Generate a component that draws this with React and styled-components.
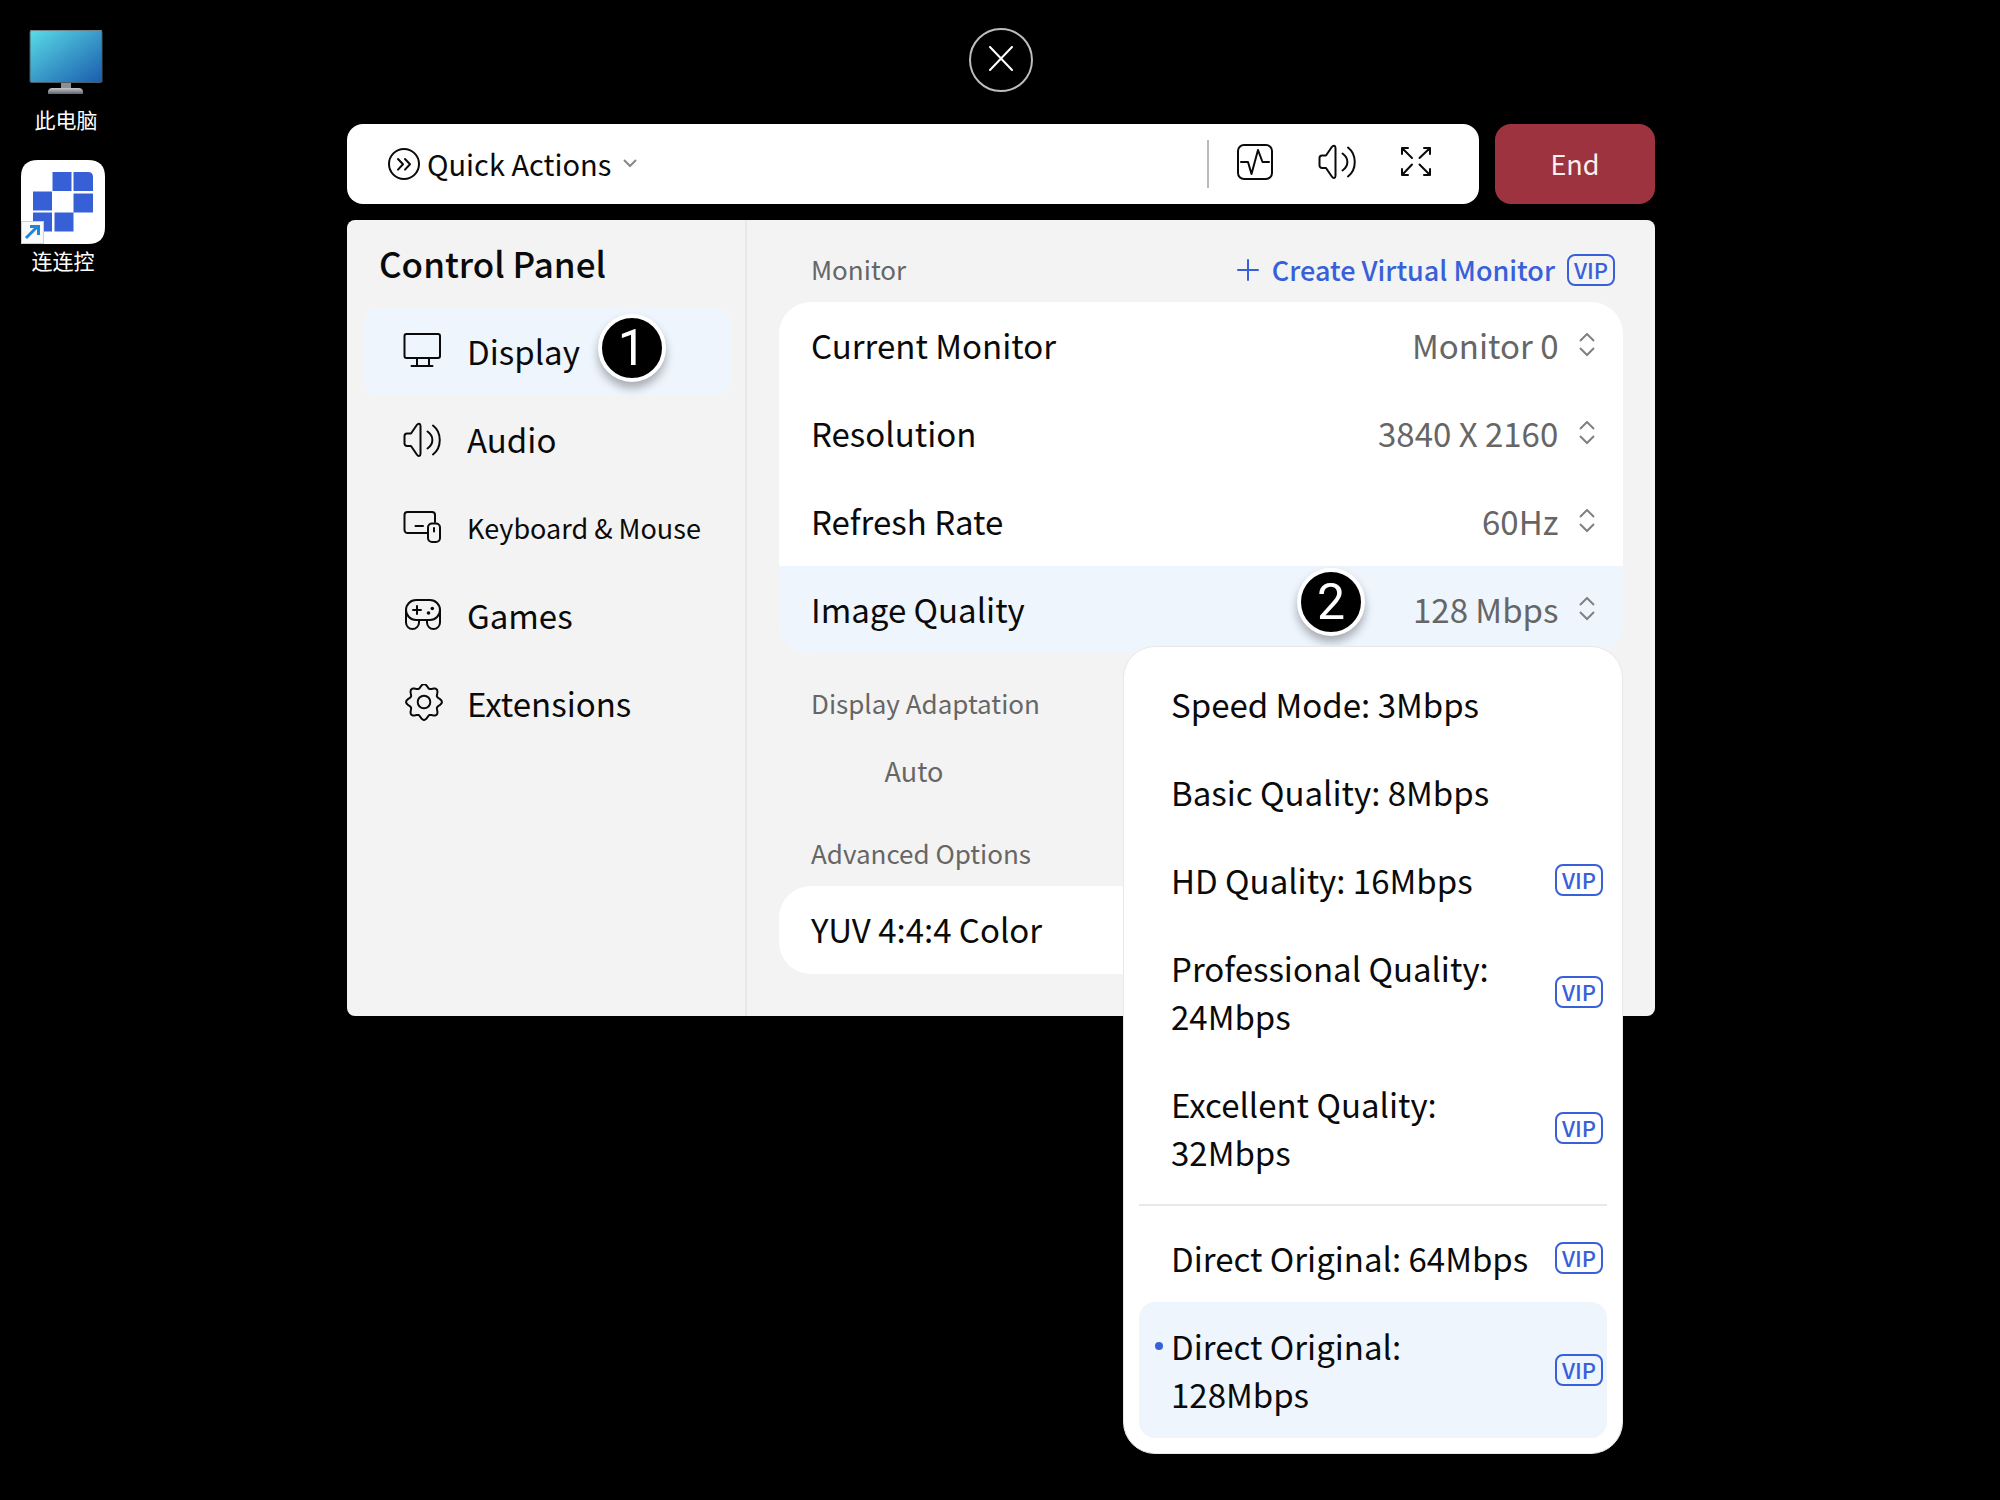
import styled, { createGlobalStyle } from "styled-components"

const GlobalStyle = createGlobalStyle`
  * {
    box-sizing: border-box;
  }

  body {
    margin: 0;
    background: #000;
    color: #0a0a0a;
    font-family: "Noto Sans CJK SC", "Noto Sans", sans-serif;
    font-size: 32px;
    line-height: 48px;
  }

  button, select {
    margin: 0;
    padding: 0;
    border: 0;
    background: none;
    color: inherit;
    font: inherit;
    cursor: pointer;
  }

  h1, h2, p, ul {
    margin: 0;
    padding: 0;
  }

  svg {
    display: block;
    flex-shrink: 0;
  }
`

const Desktop = styled.div`
  min-height: 100vh;
  display: grid;
  grid-template-columns: 114px minmax(0, 1fr);
  padding-right: 112px;
`

const Shortcuts = styled.nav`
  display: flex;
  flex-direction: column;
  align-items: flex-start;
  gap: 25px;
  padding: 28px 0 0 21px;
`

const Shortcut = styled.a`
  display: flex;
  flex-direction: column;
  align-items: center;
  gap: ${props => props.$gap || "0"};
  padding-left: ${props => props.$indent || "0"};
  color: #fff;
  font-size: 21px;
  line-height: 32px;
  text-decoration: none;
`

const Session = styled.main`
  width: 100%;
  max-width: 1308px;
  margin: 0 auto;
  padding-top: 28px;
  display: flex;
  flex-direction: column;
`

const CloseButton = styled.button`
  width: 64px;
  height: 64px;
  display: grid;
  place-items: center;
  align-self: center;
  border: 2px solid #bdbdbd;
  border-radius: 50%;
  color: #fff;
`

const TopRow = styled.div`
  display: flex;
  gap: 16px;
  margin: 32px 0 16px;
`

const Toolbar = styled.div`
  flex: 1;
  height: 80px;
  display: flex;
  align-items: center;
  padding: 0 43px 0 40px;
  background: #fff;
  border-radius: 16px;
`

const QuickActions = styled.button`
  display: flex;
  align-items: center;
  gap: 6px;
  margin-right: auto;
  font-size: 29px;
`

const ButtonText = styled.span`
  padding-bottom: ${props => (props.$small ? "0" : "2px")};
`

const Tools = styled.div`
  display: flex;
  align-items: center;
  gap: 40px;
  height: 48px;
  padding-left: 27px;
  border-left: 2px solid #bbb;
`

const ToolButton = styled.button`
  padding-bottom: 4px;
`

const EndButton = styled.button`
  width: 160px;
  border-radius: 16px;
  background: #9d333f;
  color: #fbeff0;
  font-size: 27px;
`

const Panel = styled.section`
  display: grid;
  grid-template-columns: 400px minmax(0, 1fr);
  background: #f3f3f3;
  border-radius: 8px;
`

const Sidebar = styled.aside`
  padding: 0 14px 0 16px;
  border-right: 2px solid #e8e8e8;
`

const Title = styled.h1`
  padding: 19px 16px 21px;
  font-size: 35px;
  font-weight: 500;
  line-height: 48px;
`

const NavList = styled.ul`
  list-style: none;
`

const NavItem = styled.button`
  width: 100%;
  height: 88px;
  display: flex;
  align-items: center;
  gap: 24px;
  padding-left: 40px;
  border-radius: 16px;
  background: ${props => (props.$active ? "#eef5fd" : "transparent")};
  font-size: ${props => (props.$small ? "27px" : "33px")};
  white-space: nowrap;
`

const Step = styled.span`
  width: 68px;
  height: 68px;
  display: grid;
  place-items: center;
  margin: 0 0 ${props => props.$lift} -6px;
  border: 4px solid #fff;
  border-radius: 50%;
  background: #000;
  box-shadow: 0 6px 10px rgba(0, 0, 0, 0.3);
  color: #fff;
  font-family: Roboto, sans-serif;
  font-size: 50px;
`

const Content = styled.div`
  padding: 30px 32px 42px;
`

const SectionHead = styled.div`
  display: flex;
  align-items: center;
  justify-content: space-between;
  height: 52px;
  padding: 0 8px 12px 32px;
  line-height: 40px;
`

const SectionTitle = styled.h2`
  padding-bottom: 2px;
  color: #666;
  font-size: 26px;
  font-weight: 400;
`

const CreateLink = styled.a`
  display: flex;
  align-items: center;
  gap: 12px;
  color: #3860d9;
  font-size: 27px;
  font-weight: 500;
  text-decoration: none;
`

const Vip = styled.span`
  width: 48px;
  height: 32px;
  flex-shrink: 0;
  border: 2px solid #3860d9;
  border-radius: 8px;
  color: #3860d9;
  font-size: 22px;
  font-weight: 500;
  line-height: 27px;
  text-align: center;
`

const Card = styled.div`
  border-radius: 32px;
  background: #fff;
`

// holds the open quality menu over the rows below
const MonitorCard = styled(Card)`
  position: relative;
  margin-bottom: 30px;
`

const Row = styled.div`
  height: 88px;
  display: flex;
  align-items: center;
  padding: 0 28px 2px 32px;
  background: ${props => (props.$active ? "#eef5fd" : "transparent")};
  border-radius: ${props => (props.$active ? "0 0 32px 32px" : "0")};
`

const RowLabel = styled.label`
  margin-right: auto;
  font-size: 33px;
`

const RowSelect = styled.select`
  appearance: none;
  margin: 0 20px 0 ${props => (props.$step ? "48px" : "0")};
  color: #666;
  font-size: 33px;
`

const Adaptation = styled.button`
  width: 270px;
  height: 72px;
  display: block;
  margin-bottom: 26px;
  padding-bottom: 2px;
  color: #666;
  font-size: 27px;
`

const Menu = styled.ul`
  position: absolute;
  top: 344px;
  right: 0;
  width: 500px;
  padding: 13px 15px 15px;
  border: 1px solid #e8e8e8;
  border-radius: 32px;
  background: #fff;
  list-style: none;
`

const MenuItem = styled.button`
  width: 100%;
  min-height: 88px;
  display: grid;
  grid-template-columns: 1fr 48px;
  align-items: center;
  gap: 16px;
  padding: 20px 4px 20px 32px;
  border-radius: 16px;
  background: ${props => (props.$selected ? "#eef5fd" : "transparent")};
  font-size: 33px;
  text-align: left;
`

const MenuText = styled.span`
  position: relative;

  &::before {
    content: "";
    display: ${props => (props.$selected ? "block" : "none")};
    position: absolute;
    top: 20px;
    left: -16px;
    width: 8px;
    height: 8px;
    border-radius: 50%;
    background: #3860d9;
  }
`

const Divider = styled.li`
  height: 2px;
  margin: 8px 0;
  background: #e8e8e8;
`

const Icon = ({ size = 40, box, children }) => (
  <svg
    width={size}
    height={size}
    viewBox={box || `0 0 ${size} ${size}`}
    fill="none"
    stroke="currentColor"
    strokeWidth="2"
    strokeLinecap="round"
    strokeLinejoin="round"
    aria-hidden="true"
  >
    {children}
  </svg>
)

const gearPath = () => {
  const points = []
  for (let i = 0; i < 120; i++) {
    const a = (i / 120) * Math.PI * 2
    const r = 16 + 1.9 * Math.cos(8 * a)
    points.push(`${(21 + r * Math.cos(a)).toFixed(2)} ${(18 + r * Math.sin(a)).toFixed(2)}`)
  }
  return `M${points.join("L")}Z`
}

const DisplayIcon = () => (
  <Icon>
    <rect x="1.5" y="2" width="35.5" height="24" rx="2" />
    <path d="M14 26v8M26 26v8M8.5 34H29.5" />
  </Icon>
)

const AudioIcon = ({ box }) => (
  <Icon box={box}>
    <path d="M8 13.5H4a2.5 2.5 0 0 0-2.5 2.5v7.5a2.5 2.5 0 0 0 2.5 2.5h4l5.8 8.5c1.4 2 3.7 2 3.7-.8V6c0-2.8-2.3-2.8-3.7-1z" />
    <path d="M24.5 11.5c6.5 4.5 6.5 12.5 0 17M30 5.5c9 7 9 22 0 29" />
  </Icon>
)

const KeyboardIcon = () => (
  <Icon>
    <path d="M24 25H4.5a3 3 0 0 1-3-3V7a3 3 0 0 1 3-3H29a3 3 0 0 1 3 3v7M12.5 18H20" />
    <rect x="25" y="15.5" width="12" height="18.5" rx="4" />
    <path d="M31 20v3.5" />
  </Icon>
)

const GamesIcon = () => (
  <Icon>
    <rect x="3" y="4" width="34" height="20" rx="10" />
    <path d="M3 14v12.5a6.5 6.5 0 0 0 13 0V24M37 14v12.5a6.5 6.5 0 0 1-13 0V24M14 10v8M10 14h8" />
    <circle cx="29.3" cy="12.5" r="1.8" fill="currentColor" stroke="none" />
    <circle cx="25.5" cy="17" r="1.8" fill="currentColor" stroke="none" />
  </Icon>
)

const GearIcon = () => (
  <Icon>
    <path d={gearPath()} />
    <circle cx="21" cy="18" r="6.3" />
  </Icon>
)

const PulseIcon = () => (
  <Icon>
    <rect x="2" y="3" width="34" height="34" rx="6" />
    <path d="M5 20h7l3.5 12L22 8l4.5 12H33" />
  </Icon>
)

const ExpandIcon = () => (
  <Icon>
    <path d="M6 12V6h6M6 6l10 10M28 6h6v6M34 6L23.5 16M6 27v6h6M6 33l10-10.5M34 27v6h-6M34 33L23.5 22.5" />
  </Icon>
)

const QuickIcon = () => (
  <Icon size={34}>
    <circle cx="17" cy="17" r="15" />
    <path d="M11 12l5 5.3-5 5.3M18 12l5 5.3-5 5.3" />
  </Icon>
)

const ChevronDown = () => (
  <svg width="24" height="16" viewBox="-3 0 24 16" fill="none" stroke="#888" strokeWidth="2" aria-hidden="true">
    <path d="M4 4l6 6 6-6" />
  </svg>
)

const Chevrons = () => (
  <svg width="16" height="24" viewBox="0 0 16 24" fill="none" stroke="#808080" strokeWidth="2" aria-hidden="true">
    <path d="M1 8l7-7 7 7M1 15l7 7 7-7" />
  </svg>
)

const ComputerArt = () => (
  <svg width="74" height="68" viewBox="0 0 74 68" aria-hidden="true">
    <defs>
      <linearGradient id="screen" x1="0" y1="0" x2="1" y2="1">
        <stop offset="0" stopColor="#59dce6" />
        <stop offset="0.5" stopColor="#3a9bca" />
        <stop offset="1" stopColor="#1a5cad" />
      </linearGradient>
      <linearGradient id="stand" x1="0" y1="0" x2="0" y2="1">
        <stop offset="0" stopColor="#c4c7cd" />
        <stop offset="1" stopColor="#5f656d" />
      </linearGradient>
    </defs>
    <rect x="32" y="54" width="10" height="9" fill="#8b9098" />
    <path d="M19 66v-3q1-3 4-3h27q3 0 4 3v3z" fill="url(#stand)" />
    <rect x="1" y="2.5" width="72" height="52" rx="1.5" fill="url(#screen)" stroke="#4b5c68" />
    <path d="M1 2.5h72" stroke="#70828c" />
  </svg>
)

const AppArt = () => (
  <svg width="84" height="84" viewBox="0 0 84 84" aria-hidden="true">
    <path d="M17 0h50q17 0 17 17v50q0 17-17 17H0V17Q0 0 17 0z" fill="#fff" />
    <path
      d="M31.5 12h19v19h-19zM52.5 12H67q5 0 5 5v14H52.5zM12 31.5h19v19H12zM52.5 33.500H72v19H52.5zM12 52.5h19v19H12zM33.5 52.5h19v19h-19z"
      fill="#3860d6"
    />
    <rect x="0.5" y="61.5" width="22" height="22" fill="#fafafa" stroke="#c9d0dc" />
    <path d="M5 78L17 66M9 66.5h8.5V75" fill="none" stroke="#2385d8" strokeWidth="3" />
  </svg>
)

const navItems = [
  { name: "Display", icon: DisplayIcon, active: true, step: 1 },
  { name: "Audio", icon: AudioIcon },
  { name: "Keyboard & Mouse", icon: KeyboardIcon, small: true },
  { name: "Games", icon: GamesIcon },
  { name: "Extensions", icon: GearIcon },
]

const settings = [
  { id: "monitor", label: "Current Monitor", value: "Monitor 0" },
  { id: "resolution", label: "Resolution", value: "3840 X 2160" },
  { id: "refresh", label: "Refresh Rate", value: "60Hz" },
  { id: "quality", label: "Image Quality", value: "128 Mbps", active: true, step: 2 },
]

const qualities = [
  { name: "Speed Mode: 3Mbps" },
  { name: "Basic Quality: 8Mbps" },
  { name: "HD Quality: 16Mbps", vip: true },
  { name: "Professional Quality: 24Mbps", vip: true },
  { name: "Excellent Quality: 32Mbps", vip: true },
]

const originals = [
  { name: "Direct Original: 64Mbps", vip: true },
  { name: "Direct Original: 128Mbps", vip: true, selected: true },
]

const QualityOption = ({ item }) => (
  <li>
    <MenuItem type="button" $selected={item.selected}>
      <MenuText $selected={item.selected}>{item.name}</MenuText>
      {item.vip && <Vip>VIP</Vip>}
    </MenuItem>
  </li>
)

const ControlPanel = () => (
  <Panel>
    <Sidebar>
      <Title>Control Panel</Title>
      <NavList>
        {navItems.map(item => (
          <li key={item.name}>
            <NavItem type="button" $active={item.active} $small={item.small}>
              <item.icon />
              <ButtonText $small={item.small}>{item.name}</ButtonText>
              {item.step && <Step $lift="8px">{item.step}</Step>}
            </NavItem>
          </li>
        ))}
      </NavList>
    </Sidebar>

    <Content>
      <SectionHead>
        <SectionTitle>Monitor</SectionTitle>
        <CreateLink href="#create">
          <Icon size={24}><path d="M12 2v20M2 12h20" /></Icon>
          Create Virtual Monitor
          <Vip>VIP</Vip>
        </CreateLink>
      </SectionHead>
      <MonitorCard>
        {settings.map(item => (
          <Row key={item.id} $active={item.active}>
            <RowLabel htmlFor={item.id}>{item.label}</RowLabel>
            {item.step && <Step $lift="14px">{item.step}</Step>}
            <RowSelect id={item.id} $step={item.step}>
              <option>{item.value}</option>
            </RowSelect>
            <Chevrons />
          </Row>
        ))}
        <Menu>
          {qualities.map(item => <QualityOption key={item.name} item={item} />)}
          <Divider role="separator" />
          {originals.map(item => <QualityOption key={item.name} item={item} />)}
        </Menu>
      </MonitorCard>

      <SectionHead>
        <SectionTitle>Display Adaptation</SectionTitle>
      </SectionHead>
      <Adaptation type="button">Auto</Adaptation>

      <SectionHead>
        <SectionTitle>Advanced Options</SectionTitle>
      </SectionHead>
      <Card>
        <Row>
          <RowLabel as="span">YUV 4:4:4 Color</RowLabel>
        </Row>
      </Card>
    </Content>
  </Panel>
)

export default function App() {
  return (
    <Desktop>
      <GlobalStyle />
      <Shortcuts>
        <Shortcut href="#computer" $gap="7px" $indent="8px">
          <ComputerArt />
          此电脑
        </Shortcut>
        <Shortcut href="#app">
          <AppArt />
          连连控
        </Shortcut>
      </Shortcuts>

      <Session>
        <CloseButton type="button" aria-label="Close">
          <Icon size={28}><path d="M3 1l22 23M25 1L3 24" /></Icon>
        </CloseButton>
        <TopRow>
          <Toolbar>
            <QuickActions type="button">
              <QuickIcon />
              <ButtonText>Quick Actions</ButtonText>
              <ChevronDown />
            </QuickActions>
            <Tools>
              <ToolButton type="button" aria-label="Performance"><PulseIcon /></ToolButton>
              <ToolButton type="button" aria-label="Sound"><AudioIcon box="-2 0 40 40" /></ToolButton>
              <ToolButton type="button" aria-label="Full screen"><ExpandIcon /></ToolButton>
            </Tools>
          </Toolbar>
          <EndButton type="button">End</EndButton>
        </TopRow>
        <ControlPanel />
      </Session>
    </Desktop>
  )
}
